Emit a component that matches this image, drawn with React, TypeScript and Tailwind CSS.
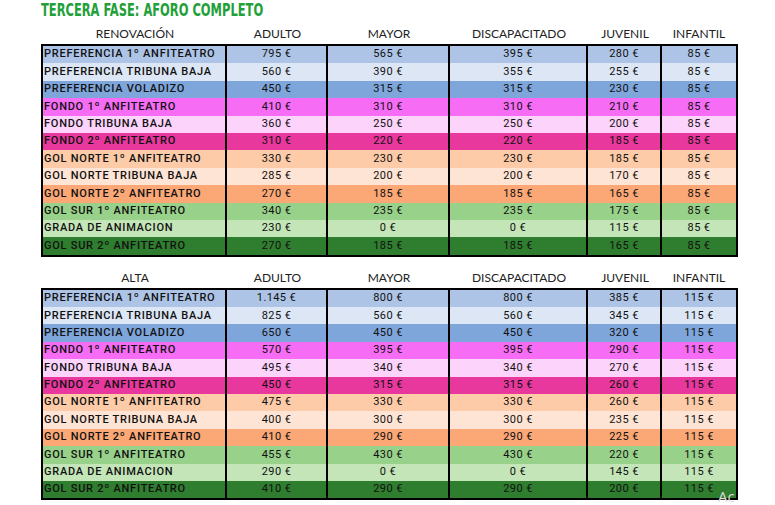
const ZONES = [
  { name: "PREFERENCIA 1º ANFITEATRO", bg: "bg-[#adc4e7]" },
  { name: "PREFERENCIA TRIBUNA BAJA", bg: "bg-[#dce6f4]" },
  { name: "PREFERENCIA VOLADIZO", bg: "bg-[#7fa6db]" },
  { name: "FONDO 1º ANFITEATRO", bg: "bg-[#f66cf4]" },
  { name: "FONDO TRIBUNA BAJA", bg: "bg-[#fcd3fb]" },
  { name: "FONDO 2º ANFITEATRO", bg: "bg-[#e8379d]" },
  { name: "GOL NORTE 1º ANFITEATRO", bg: "bg-[#fdcba8]" },
  { name: "GOL NORTE TRIBUNA BAJA", bg: "bg-[#fee4d4]" },
  { name: "GOL NORTE 2º ANFITEATRO", bg: "bg-[#fba776]" },
  { name: "GOL SUR 1º ANFITEATRO", bg: "bg-[#98d18a]" },
  { name: "GRADA DE ANIMACION", bg: "bg-[#c3e5b8]" },
  { name: "GOL SUR 2º ANFITEATRO", bg: "bg-[#2f7d2e]" },
];

const RENOVACION = [
  ["795 €", "565 €", "395 €", "280 €", "85 €"],
  ["560 €", "390 €", "355 €", "255 €", "85 €"],
  ["450 €", "315 €", "315 €", "230 €", "85 €"],
  ["410 €", "310 €", "310 €", "210 €", "85 €"],
  ["360 €", "250 €", "250 €", "200 €", "85 €"],
  ["310 €", "220 €", "220 €", "185 €", "85 €"],
  ["330 €", "230 €", "230 €", "185 €", "85 €"],
  ["285 €", "200 €", "200 €", "170 €", "85 €"],
  ["270 €", "185 €", "185 €", "165 €", "85 €"],
  ["340 €", "235 €", "235 €", "175 €", "85 €"],
  ["230 €", "0 €", "0 €", "115 €", "85 €"],
  ["270 €", "185 €", "185 €", "165 €", "85 €"],
];

const ALTA = [
  ["1.145 €", "800 €", "800 €", "385 €", "115 €"],
  ["825 €", "560 €", "560 €", "345 €", "115 €"],
  ["650 €", "450 €", "450 €", "320 €", "115 €"],
  ["570 €", "395 €", "395 €", "290 €", "115 €"],
  ["495 €", "340 €", "340 €", "270 €", "115 €"],
  ["450 €", "315 €", "315 €", "260 €", "115 €"],
  ["475 €", "330 €", "330 €", "260 €", "115 €"],
  ["400 €", "300 €", "300 €", "235 €", "115 €"],
  ["410 €", "290 €", "290 €", "225 €", "115 €"],
  ["455 €", "430 €", "430 €", "220 €", "115 €"],
  ["290 €", "0 €", "0 €", "145 €", "115 €"],
  ["410 €", "290 €", "290 €", "200 €", "115 €"],
];

const COLS = "grid grid-cols-[184px_101px_122px_138px_74px_74px]";

function Header({ first }: { first: string }) {
  return (
    <div className={`${COLS} ml-[2px] h-[24px] items-end pb-[3px] text-[12px] leading-[14px] text-[#222] font-['Lato',sans-serif]`}>
      {[first, "ADULTO", "MAYOR", "DISCAPACITADO", "JUVENIL", "INFANTIL"].map((h) => (
        <div key={h} className="text-center">
          {h}
        </div>
      ))}
    </div>
  );
}

function PriceTable({ prices }: { prices: string[][] }) {
  return (
    <div className="w-[697px] border-2 border-black">
      {ZONES.map((z, i) => (
        <div key={z.name} className={`${COLS} h-[17.4px] ${z.bg} text-[11px] text-[#111] font-['Roboto',sans-serif]`}>
          <div className="border-r-2 border-black pl-[1px] flex items-center font-medium tracking-[0.75px] whitespace-nowrap">
            {z.name}
          </div>
          {prices[i].map((p, j) => (
            <div
              key={j}
              className={`flex items-center justify-center tracking-[0.4px] ${j < 4 ? "border-r-2 border-black" : ""}`}
            >
              {p}
            </div>
          ))}
        </div>
      ))}
    </div>
  );
}

export default function App() {
  return (
    <div className="relative w-[775px] h-[505px] bg-white pl-[41px] overflow-hidden">
      <div className="h-[20px] pt-[1px]">
        <div className="origin-left scale-x-[0.75] text-[17px] leading-[18px] font-bold text-[#21a038] font-['DejaVu_Sans_Condensed','DejaVu_Sans',sans-serif] whitespace-nowrap">
          TERCERA FASE: AFORO COMPLETO
        </div>
      </div>
      <Header first="RENOVACIÓN" />
      <PriceTable prices={RENOVACION} />
      <div className="h-[7px]" />
      <Header first="ALTA" />
      <PriceTable prices={ALTA} />
      <div className="absolute left-[718px] top-[485px] text-[15px] text-[#dcdcdc] font-['Open_Sans',sans-serif]">
        Ac
      </div>
    </div>
  );
}
